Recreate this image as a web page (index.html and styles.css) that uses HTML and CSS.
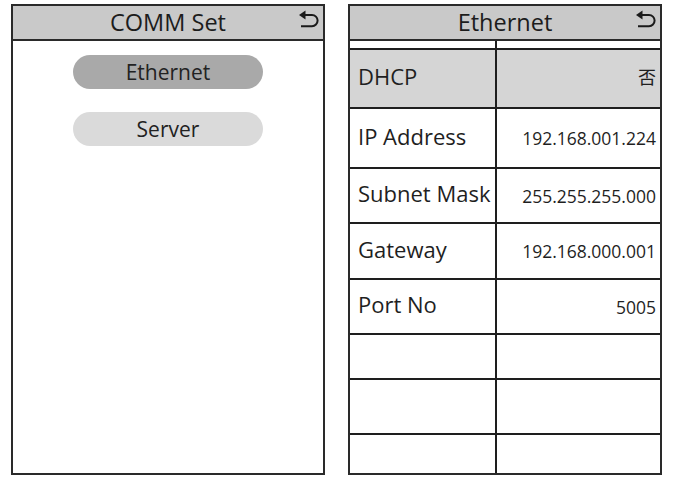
FILE: index.html
```html
<!DOCTYPE html>
<html>
<head>
<meta charset="utf-8">
<link rel="stylesheet" href="styles.css">
</head>
<body>
<div class="screens">
  <div class="panel">
    <div class="header">
      <span class="title">COMM Set</span>
      <svg class="back" viewBox="0 0 20 18" width="20" height="18"><path d="M5 5 H13 A5.6 5.6 0 0 1 13 16.2 H2" fill="none" stroke="#1a1a1a" stroke-width="2"/><path d="M0 5 L6.5 0.6 L6.5 9.4 Z" fill="#1a1a1a"/></svg>
    </div>
    <div class="menu">
      <div class="pill pill-active">Ethernet</div>
      <div class="pill">Server</div>
    </div>
  </div>
  <div class="panel">
    <div class="header">
      <span class="title">Ethernet</span>
      <svg class="back" viewBox="0 0 20 18" width="20" height="18"><path d="M5 5 H13 A5.6 5.6 0 0 1 13 16.2 H2" fill="none" stroke="#1a1a1a" stroke-width="2"/><path d="M0 5 L6.5 0.6 L6.5 9.4 Z" fill="#1a1a1a"/></svg>
    </div>
    <div class="table">
      <div class="row r-strip"><div class="cell label"></div><div class="cell value"></div></div>
      <div class="row r-dhcp sel"><div class="cell label">DHCP</div><div class="cell value cjk">否</div></div>
      <div class="row r-ip"><div class="cell label">IP Address</div><div class="cell value">192.168.001.224</div></div>
      <div class="row r-55"><div class="cell label">Subnet Mask</div><div class="cell value">255.255.255.000</div></div>
      <div class="row r-56"><div class="cell label">Gateway</div><div class="cell value">192.168.000.001</div></div>
      <div class="row r-55"><div class="cell label">Port No</div><div class="cell value">5005</div></div>
      <div class="row r-45"><div class="cell label"></div><div class="cell value"></div></div>
      <div class="row r-55"><div class="cell label"></div><div class="cell value"></div></div>
      <div class="row r-last"><div class="cell label"></div><div class="cell value"></div></div>
    </div>
  </div>
</div>
</body>
</html>
```

FILE: styles.css
```css
html, body {
  margin: 0;
  padding: 0;
  background: #ffffff;
}
body {
  font-family: "Open Sans", "Noto Sans", sans-serif;
  color: #1f1f1f;
}
.screens {
  display: flex;
  gap: 23px;
  padding: 4px 0 0 11px;
}
.panel {
  width: 314px;
  height: 471px;
  box-sizing: border-box;
  border: 2px solid #2a2a2a;
  display: flex;
  flex-direction: column;
  background: #ffffff;
}
.header {
  height: 33px;
  border-bottom: 2px solid #2a2a2a;
  background: #c9c9c9;
  display: flex;
  align-items: center;
  justify-content: center;
  position: relative;
  flex-shrink: 0;
}
.title {
  font-size: 23.5px;
  line-height: 33px;
  color: #1c1c1c;
}
.back {
  position: absolute;
  right: 4px;
  top: 4px;
}
.menu {
  display: flex;
  flex-direction: column;
  align-items: center;
  gap: 23px;
  padding-top: 14px;
}
.pill {
  width: 190px;
  height: 34px;
  border-radius: 17px;
  background: #dadada;
  font-size: 21px;
  line-height: 34px;
  text-align: center;
  color: #222222;
}
.pill-active {
  background: #a9a9a9;
}
.table {
  flex: 1;
  display: flex;
  flex-direction: column;
}
.row {
  display: flex;
  box-sizing: border-box;
  border-top: 2px solid #1e1e1e;
  flex-shrink: 0;
}
.r-strip { height: 7px; border-top: none; }
.r-dhcp { height: 59px; }
.r-ip { height: 60px; }
.r-55 { height: 55px; }
.r-56 { height: 56px; }
.r-45 { height: 45px; }
.r-last { flex: 1; }
.sel { background: #d5d5d5; }
.cell {
  display: flex;
  align-items: center;
  box-sizing: border-box;
}
.label {
  width: 147px;
  border-right: 2px solid #1e1e1e;
  padding: 0 0 5px 8px;
  font-size: 22px;
  color: #1f1f1f;
  flex-shrink: 0;
}
.value {
  flex: 1;
  justify-content: flex-end;
  padding-right: 4px;
  font-size: 17.5px;
  color: #1f1f1f;
}
.cjk {
  font-family: "Noto Sans CJK SC", sans-serif;
  font-size: 18px;
  padding-bottom: 6px;
}
```
